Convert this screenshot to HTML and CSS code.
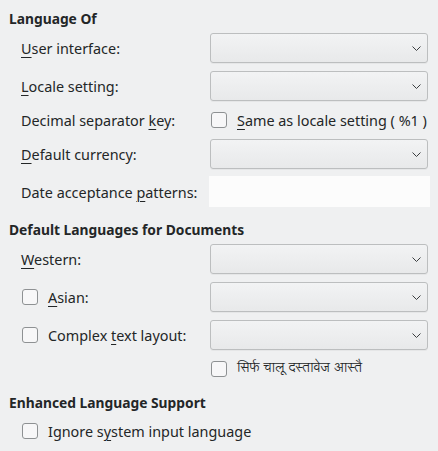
FILE: index.html
```html
<!DOCTYPE html>
<html lang="en">
<head>
<meta charset="utf-8">
<title>Languages</title>
<link rel="stylesheet" href="styles.css">
</head>
<body>
<div class="page">
  <section class="section first">
    <h2 class="heading">Language Of</h2>
    <div class="form">
      <div class="label"><span><u>U</u>ser interface:</span></div>
      <div class="combo"><span class="chev"><svg width="9" height="5" viewBox="0 0 9 5"><path d="M0.5 0.5 L4.5 4.5 L8.5 0.5" fill="none" stroke="#3b3e40" stroke-width="1"/></svg></span></div>

      <div class="label"><span><u>L</u>ocale setting:</span></div>
      <div class="combo"><span class="chev"><svg width="9" height="5" viewBox="0 0 9 5"><path d="M0.5 0.5 L4.5 4.5 L8.5 0.5" fill="none" stroke="#3b3e40" stroke-width="1"/></svg></span></div>

      <div class="label short"><span>Decimal separator <u>k</u>ey:</span></div>
      <label class="check short"><span class="box"></span><span><u>S</u>ame as locale setting ( %1 )</span></label>

      <div class="label"><span><u>D</u>efault currency:</span></div>
      <div class="combo"><span class="chev"><svg width="9" height="5" viewBox="0 0 9 5"><path d="M0.5 0.5 L4.5 4.5 L8.5 0.5" fill="none" stroke="#3b3e40" stroke-width="1"/></svg></span></div>

      <div class="label"><span>Date acceptance <u>p</u>atterns:</span></div>
      <div class="entry"></div>
    </div>
  </section>

  <section class="section">
    <h2 class="heading">Default Languages for Documents</h2>
    <div class="form">
      <div class="label"><span><u>W</u>estern:</span></div>
      <div class="combo"><span class="chev"><svg width="9" height="5" viewBox="0 0 9 5"><path d="M0.5 0.5 L4.5 4.5 L8.5 0.5" fill="none" stroke="#3b3e40" stroke-width="1"/></svg></span></div>

      <label class="check"><span class="box"></span><span><u>A</u>sian:</span></label>
      <div class="combo"><span class="chev"><svg width="9" height="5" viewBox="0 0 9 5"><path d="M0.5 0.5 L4.5 4.5 L8.5 0.5" fill="none" stroke="#3b3e40" stroke-width="1"/></svg></span></div>

      <label class="check"><span class="box"></span><span>Complex <u>t</u>ext layout:</span></label>
      <div class="combo"><span class="chev"><svg width="9" height="5" viewBox="0 0 9 5"><path d="M0.5 0.5 L4.5 4.5 L8.5 0.5" fill="none" stroke="#3b3e40" stroke-width="1"/></svg></span></div>

      <label class="check short col2"><span class="box"></span><span class="deva">सिर्फ चालू दस्तावेज आस्तै</span></label>
    </div>
  </section>

  <section class="section">
    <h2 class="heading">Enhanced Language Support</h2>
    <div class="form">
      <label class="check last span"><span class="box"></span><span>Ignore s<u>y</u>stem input language</span></label>
    </div>
  </section>
</div>
</body>
</html>
```

FILE: styles.css
```css
html, body {
  margin: 0;
  padding: 0;
  background: #eff0f1;
}

.page {
  width: 438px;
  height: 451px;
  box-sizing: border-box;
  padding: 8px 10px 0 9px;
  font-family: "Noto Sans", "DejaVu Sans", sans-serif;
  font-size: 14.4px;
  color: #232627;
  display: flex;
  flex-direction: column;
  gap: 12px;
}

.heading {
  margin: 0 0 5px 0;
  font-size: 13.8px;
  font-weight: bold;
  line-height: 20px;
  padding-top: 1px;
  height: 19px;
}

.form {
  display: grid;
  grid-template-columns: 1fr 218px;
  row-gap: 8px;
  padding-left: 12px;
}

.label {
  height: 30px;
  display: flex;
  align-items: center;
  white-space: nowrap;
}

.label.short {
  height: 22px;
}

u {
  text-decoration: underline;
  text-decoration-thickness: 1px;
  text-underline-offset: 3px;
}

.combo {
  height: 30px;
  box-sizing: border-box;
  border: 1px solid #bcbebf;
  border-radius: 3px;
  background: linear-gradient(#f2f3f4, #e8e9ea);
  box-shadow: 0 1px 0 rgba(0, 0, 0, 0.04);
  display: flex;
  align-items: center;
  justify-content: flex-end;
  padding-right: 6px;
}

.chev {
  display: flex;
  width: 9px;
  height: 5px;
}

.entry {
  height: 31px;
  margin: -1px -2px 0 -1px;
  background: #fcfcfc;
}

.check {
  height: 30px;
  display: flex;
  align-items: center;
  gap: 10px;
  white-space: nowrap;
}

.check.short {
  height: 22px;
}

.check.last {
  height: 28px;
}

.check.col2 {
  grid-column: 2;
}

.check.span {
  grid-column: 1 / span 2;
}

.box {
  flex: none;
  width: 16px;
  height: 16px;
  margin-left: 1px;
  box-sizing: border-box;
  border: 1px solid #8e9193;
  border-radius: 3px;
  background: #f7f7f8;
}

.deva {
  font-family: "Lohit Devanagari", "FreeSerif", "Noto Sans Devanagari", serif;
  font-size: 13.2px;
}
```
